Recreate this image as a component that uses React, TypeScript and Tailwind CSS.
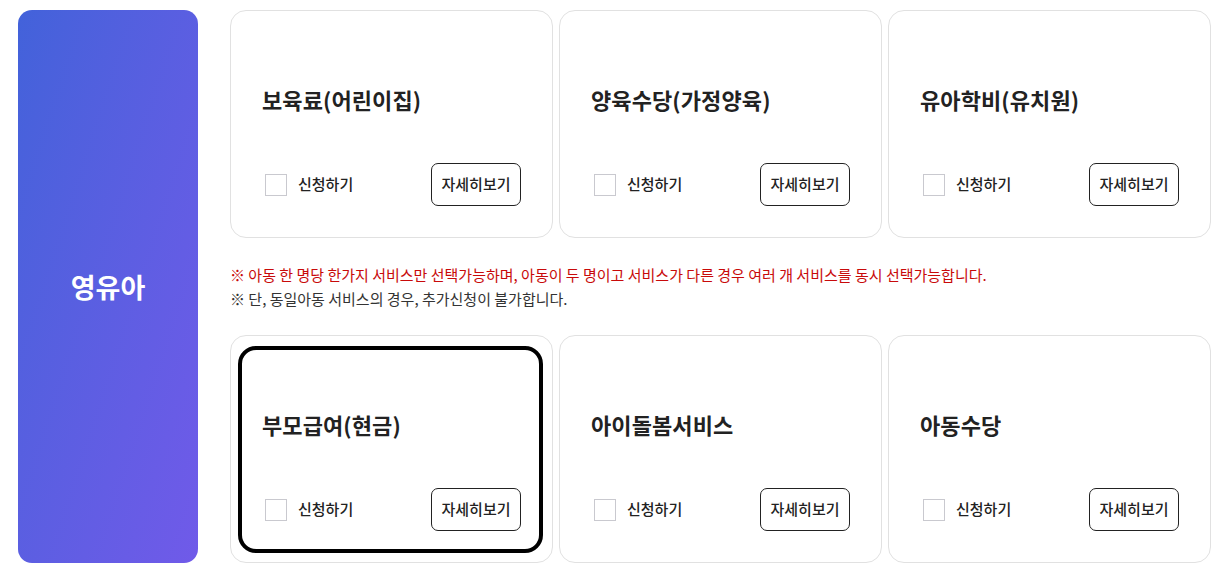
import { ReactNode } from 'react';

const FONT = '"Noto Sans CJK KR", "Noto Sans", sans-serif';

type Service = { name: string; focused?: boolean };

const ROW1: Service[] = [{ name: '보육료(어린이집)' }, { name: '양육수당(가정양육)' }, { name: '유아학비(유치원)' }];
const ROW2: Service[] = [{ name: '부모급여(현금)', focused: true }, { name: '아이돌봄서비스' }, { name: '아동수당' }];

const Card = ({ name, focused }: Service): ReactNode => (
  <div className="relative flex h-[228px] flex-col rounded-[16px] border border-[#e1e1e1] bg-white pl-[31px] pr-[31px]">
    {focused && (
      <div className="pointer-events-none absolute left-[7px] right-[9px] top-[10px] bottom-[9px] rounded-[18px] border-[4px] border-black"></div>
    )}
    <h3 className="mt-[72px] text-[22px] font-bold leading-[32px] tracking-[0.1px] text-[#222]">{name}</h3>
    <div className="mt-[48px] flex items-center justify-between">
      <label className="flex items-center gap-[11px] pl-[3px]">
        <span className="h-[22px] w-[22px] border border-[#c9c9cf] bg-white"></span>
        <span className="text-[15px] font-medium text-[#222]">신청하기</span>
      </label>
      <button className="h-[43px] w-[90px] rounded-[7px] border border-[#222] bg-white text-[15px] font-medium text-[#222]">
        자세히보기
      </button>
    </div>
  </div>
);

export default function App(): ReactNode {
  return (
    <div className="flex h-[575px] w-[1225px] bg-white pl-[18px] pt-[10px]" style={{ fontFamily: FONT }}>
      <div className="flex h-[553px] w-[180px] shrink-0 items-center justify-center rounded-[14px] bg-gradient-to-br from-[#4262da] to-[#705ae9] pt-[2px]">
        <span className="text-[27px] font-bold text-white">영유아</span>
      </div>
      <div className="ml-[32px] w-[981px]">
        <div className="grid grid-cols-3 gap-[6px]">
          {ROW1.map((s) => (
            <Card key={s.name} {...s} />
          ))}
        </div>
        <div className="mt-[25px] text-[15px] leading-[24px]">
          <p className="text-[#c80a0a]">
            ※ 아동 한 명당 한가지 서비스만 선택가능하며, 아동이 두 명이고 서비스가 다른 경우 여러 개 서비스를 동시 선택가능합니다.
          </p>
          <p className="text-[#333]">※ 단, 동일아동 서비스의 경우, 추가신청이 불가합니다.</p>
        </div>
        <div className="mt-[24px] grid grid-cols-3 gap-[6px]">
          {ROW2.map((s) => (
            <Card key={s.name} {...s} />
          ))}
        </div>
      </div>
    </div>
  );
}
